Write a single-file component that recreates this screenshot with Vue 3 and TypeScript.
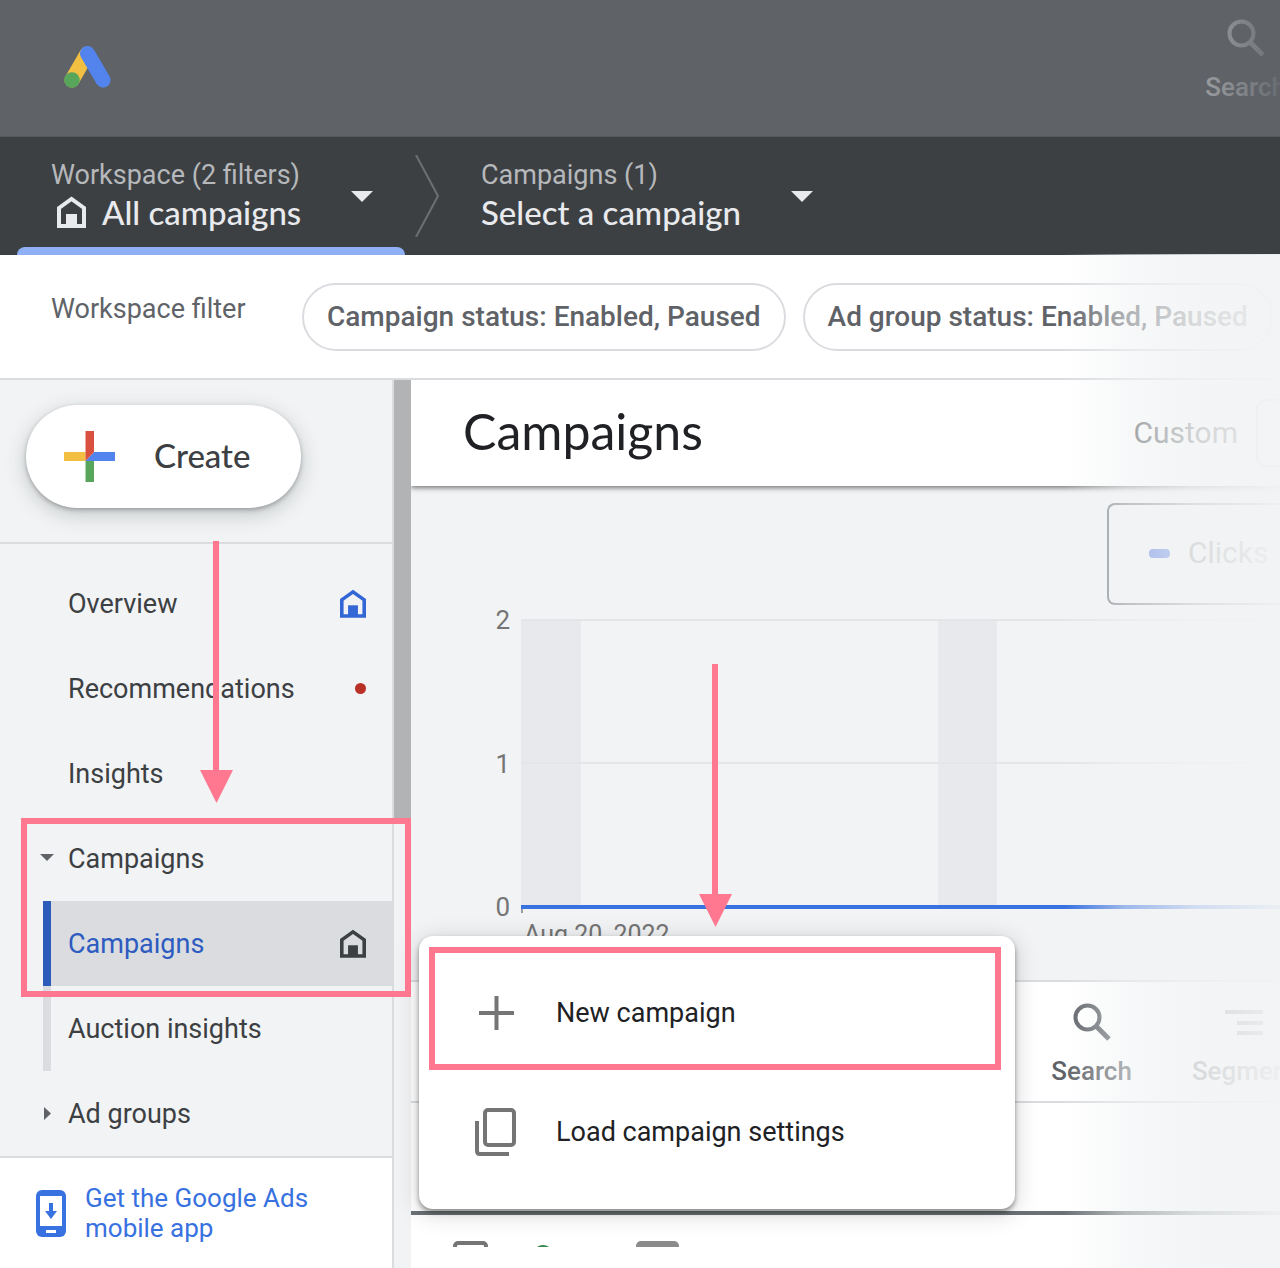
<script setup lang="ts">
interface NavItem {
  label: string
  badge?: 'home' | 'dot'
  caret?: 'down' | 'right'
  sub?: boolean
  active?: boolean
}

const navItems: NavItem[] = [
  { label: 'Overview', badge: 'home' },
  { label: 'Recommendations', badge: 'dot' },
  { label: 'Insights' },
  { label: 'Campaigns', caret: 'down' },
  { label: 'Campaigns', badge: 'home', sub: true, active: true },
  { label: 'Auction insights', sub: true },
  { label: 'Ad groups', caret: 'right' },
]

const axisTicks: number[] = [2, 1, 0]
</script>

<template>
  <div class="page">
    <header class="topbar">
      <svg class="logo" width="48" height="46" viewBox="0 0 48 46" role="img" aria-label="Google Ads">
        <path d="M8 36 L23 10" stroke="#f3bf42" stroke-width="15" stroke-linecap="round" />
        <path d="M23.500 9.500 L39 36" stroke="#5383ec" stroke-width="15" stroke-linecap="round" />
        <circle cx="8" cy="36" r="7.800" fill="#58a55c" />
      </svg>
      <button class="tool top-tool" type="button">
        <svg width="38" height="38" viewBox="0 0 38 38" fill="none" stroke="currentColor" stroke-width="4">
          <circle cx="14.500" cy="14.500" r="12" />
          <path d="M23 23 L36 36" stroke-width="5" />
        </svg>
        <span>Search</span>
      </button>
    </header>

    <div class="scope">
      <button class="scope-item current" type="button">
        <span class="scope-text">
          <span class="scope-label">Workspace (2 filters)</span>
          <span class="scope-value">
            <svg class="home" width="29" height="32" viewBox="0 0 29 32">
              <path d="M2 12 L14.500 3 L27 12 V30 H2 Z" fill="none" stroke="currentColor" stroke-width="4" />
              <rect x="9" y="18" width="11" height="11" fill="currentColor" />
            </svg>
            All campaigns
          </span>
        </span>
        <svg class="caret" width="22" height="11" viewBox="0 0 22 11"><path d="M0 0 H22 L11 11 Z" fill="currentColor" /></svg>
      </button>
      <svg class="chevron" width="24" height="82" viewBox="0 0 24 82" fill="none" stroke="#6d7073" stroke-width="2">
        <path d="M1 0 L23 41 L1 82" />
      </svg>
      <button class="scope-item next" type="button">
        <span class="scope-text">
          <span class="scope-label">Campaigns (1)</span>
          <span class="scope-value">Select a campaign</span>
        </span>
        <svg class="caret" width="22" height="11" viewBox="0 0 22 11"><path d="M0 0 H22 L11 11 Z" fill="currentColor" /></svg>
      </button>
    </div>

    <div class="filters">
      <span class="filters-title">Workspace filter</span>
      <button class="chip" type="button">Campaign status: Enabled, Paused</button>
      <button class="chip" type="button">Ad group status: Enabled, Paused</button>
    </div>

    <div class="body">
      <aside class="sidebar">
        <div class="create-area">
          <button class="create" type="button">
            <svg width="51" height="51" viewBox="0 0 51 51">
              <path d="M0 21 H21.500 V30 H0 Z" fill="#f3bf42" />
              <path d="M21.500 30 H30 V51 H21.500 Z" fill="#58a55c" />
              <path d="M30 21 H51 V30 H21.500 Z" fill="#5383ec" />
              <path d="M21.500 0 H30 V21 L21.500 30 Z" fill="#d9503f" />
            </svg>
            Create
          </button>
        </div>
        <nav class="nav">
          <a
            v-for="(item, index) in navItems"
            :key="index"
            href="#"
            class="nav-item"
            :class="{ sub: item.sub, active: item.active }"
          >
            <svg v-if="item.caret === 'down'" class="nav-caret" width="14" height="14" viewBox="0 0 14 14"><path d="M0 2 H14 L7 9 Z" fill="#5f6368" /></svg>
            <svg v-if="item.caret === 'right'" class="nav-caret" width="14" height="14" viewBox="0 0 14 14"><path d="M4 0 V13 L11 6.500 Z" fill="#5f6368" /></svg>
            <span class="nav-label">{{ item.label }}</span>
            <svg v-if="item.badge === 'home'" class="home" width="26" height="29" viewBox="0 0 29 32">
              <path d="M2 12 L14.500 3 L27 12 V30 H2 Z" fill="none" stroke="currentColor" stroke-width="4" />
              <rect x="9" y="18" width="11" height="11" fill="currentColor" />
            </svg>
            <i v-if="item.badge === 'dot'" class="dot"></i>
          </a>
        </nav>
        <a class="mobile-app" href="#">
          <svg width="30" height="47" viewBox="0 0 30 47">
            <rect width="30" height="47" rx="6" fill="#3871e0" />
            <rect x="4" y="6" width="22" height="30" fill="#fff" />
            <rect x="10" y="40" width="10" height="3" fill="#fff" />
            <path d="M13 13 H17 V21 H21 L15 29 L9 21 H13 Z" fill="#3871e0" />
          </svg>
          <span>Get the Google Ads<br />mobile app</span>
        </a>
      </aside>
      <div class="scroll-track"><div class="scroll-thumb"></div></div>

      <main class="main">
        <div class="title-bar">
          <h1>Campaigns</h1>
          <span class="range">Custom</span>
          <button class="range-button" type="button" aria-label="Date range"></button>
        </div>

        <section class="chart">
          <button class="metric" type="button"><i class="swatch"></i>Clicks</button>
          <div class="plot-row">
            <div class="ticks">
              <span v-for="tick in axisTicks" :key="tick">{{ tick }}</span>
            </div>
            <svg class="plot" height="296" aria-hidden="true">
              <rect x="0" y="2" width="60" height="286" fill="#e8e9ed" />
              <rect x="417" y="2" width="59" height="286" fill="#e8e9ed" />
              <rect x="0" y="0" width="100%" height="2" fill="#e3e5e7" />
              <rect x="0" y="143" width="100%" height="2" fill="#e3e5e7" />
              <rect x="0" y="286" width="2" height="8" fill="#9a9c9f" />
              <rect x="0" y="286" width="100%" height="4" fill="#3871e0" />
            </svg>
          </div>
          <div class="date">Aug 20, 2022</div>
        </section>

        <div class="toolbar">
          <button class="tool" type="button">
            <svg width="38" height="38" viewBox="0 0 38 38" fill="none" stroke="currentColor" stroke-width="4">
              <circle cx="14.500" cy="14.500" r="12" />
              <path d="M23 23 L36 36" stroke-width="5" />
            </svg>
            <span>Search</span>
          </button>
          <button class="tool" type="button">
            <svg width="38" height="38" viewBox="0 0 38 38" fill="currentColor">
              <rect x="0" y="7" width="38" height="4" />
              <rect x="12" y="18" width="26" height="4" />
              <rect x="12" y="28" width="26" height="4" />
            </svg>
            <span>Segment</span>
          </button>
        </div>
        <div class="table-gap"></div>
        <div class="table-head">
          <svg width="240" height="6" viewBox="0 0 240 6">
            <rect x="2" y="2" width="31" height="30" rx="3" fill="none" stroke="#757575" stroke-width="4" />
            <circle cx="90" cy="14" r="10" fill="#37874a" />
            <rect x="183" y="0" width="43" height="30" rx="5" fill="#8b8b8b" />
          </svg>
        </div>

        <div class="fade"></div>
        <div class="menu" role="menu">
          <button class="menu-item" type="button" role="menuitem">
            <svg width="42" height="48" viewBox="0 0 42 48" fill="none" stroke="#757575" stroke-width="4">
              <path d="M4 24 H39 M21.500 7 V41" />
            </svg>
            New campaign
          </button>
          <button class="menu-item" type="button" role="menuitem">
            <svg width="42" height="48" viewBox="0 0 42 48" fill="none" stroke="#757575" stroke-width="4">
              <rect x="10" y="2" width="29" height="35" rx="3" />
              <path d="M2 13 V43 Q2 46 5 46 H34" />
            </svg>
            Load campaign settings
          </button>
        </div>
      </main>
    </div>

    <div class="fade filters-fade"></div>
    <svg class="callouts" aria-hidden="true">
      <g fill="#ff7890">
        <path d="M213 541 H219 V770 H233 L216.500 803 L200 770 H213 Z" />
        <path d="M712 664 H718 V894 H732 L715.500 927 L699 894 H712 Z" />
      </g>
      <g fill="none" stroke="#ff7890" stroke-width="6">
        <rect x="24" y="821" width="384" height="173" />
        <rect x="432" y="950" width="566" height="117" />
      </g>
    </svg>
  </div>
</template>

<style>
body {
  margin: 0;
}
</style>

<style scoped>
.page {
  position: relative;
  display: flex;
  flex-direction: column;
  min-height: 100vh;
  overflow: hidden;
  background: #fff;
  color: #3c4043;
  font-family: Roboto, "Noto Sans", sans-serif;
  font-size: 27px;
  line-height: 32px;
  white-space: nowrap;
}
button {
  padding: 0;
  border: 0;
  background: none;
  color: inherit;
  font: inherit;
  text-align: left;
  cursor: pointer;
}
a {
  color: inherit;
  text-decoration: none;
}
svg {
  display: block;
  flex: none;
}

.topbar {
  position: relative;
  display: flex;
  justify-content: space-between;
  height: 136px;
  padding-left: 64px;
  background: #5f6368;
  border-bottom: 1px solid #54575b;
}
.logo {
  margin-top: 44px;
}
.tool {
  display: flex;
  flex-direction: column;
  align-items: center;
  gap: 14px;
  color: #5f6368;
  font-size: 26px;
  font-weight: 500;
}
.top-tool {
  margin: 19px -6px 0 0;
  color: #a4a6a9;
}
.topbar::after {
  content: "";
  position: absolute;
  inset: 0 0 0 auto;
  width: 80px;
  background: linear-gradient(90deg, rgba(95, 99, 104, 0.1), rgba(95, 99, 104, 0.85));
  pointer-events: none;
}

.scope {
  display: flex;
  height: 118px;
  background: #3c4043;
  color: #e8eaed;
}
.scope-item {
  display: flex;
  gap: 50px;
}
.scope-item.current {
  width: 388px;
  margin-left: 17px;
  padding-left: 34px;
  position: relative;
}
.scope-item.current::after {
  content: "";
  position: absolute;
  inset: auto 0 0 0;
  height: 8px;
  border-radius: 8px 8px 0 0;
  background: #8fb0f4;
}
.scope-text {
  display: flex;
  flex-direction: column;
  gap: 5px;
  padding-top: 22px;
}
.scope-label {
  color: #b6b8bb;
  font-size: 27px;
}
.scope-value {
  display: flex;
  align-items: center;
  gap: 16px;
  font-family: Lato, Roboto, sans-serif;
  font-size: 33px;
  font-weight: 500;
}
.scope-value .home {
  margin-left: 6px;
}
.caret {
  margin-top: 54px;
}
.chevron {
  margin: 18px 42px 0 10px;
}

.filters {
  display: flex;
  align-items: center;
  gap: 17px;
  height: 123px;
  border-bottom: 2px solid #dadce0;
  color: #5f6368;
}
.filters-title {
  box-sizing: border-box;
  width: 285px;
  padding: 0 0 16px 51px;
}
.chip {
  flex: none;
  height: 68px;
  padding: 0 23px;
  border: 2px solid #dadce0;
  border-radius: 34px;
  font-weight: 500;
  font-size: 28px;
}

.body {
  display: flex;
  flex: 1;
}
.sidebar {
  display: flex;
  flex-direction: column;
  width: 392px;
  flex: none;
  border-right: 2px solid #dadce0;
  background: #f1f3f4;
}
.create-area {
  padding: 25px 26px 34px;
  border-bottom: 2px solid #dadce0;
}
.create {
  display: flex;
  align-items: center;
  gap: 39px;
  width: 275px;
  height: 103px;
  padding: 0 0 4px 38px;
  border-radius: 52px;
  background: #fff;
  box-shadow: 0 2px 4px rgba(60, 64, 67, 0.35), 0 6px 20px rgba(60, 64, 67, 0.25);
  font-family: Lato, Roboto, sans-serif;
  font-size: 33px;
  font-weight: 500;
}
.create svg {
  margin-top: 4px;
}
.nav {
  padding-top: 17px;
}
.nav-item {
  display: flex;
  align-items: center;
  height: 85px;
  padding: 0 26px 0 68px;
}
.nav-item.sub {
  margin-left: 43px;
  padding-left: 17px;
  border-left: 8px solid #dadce0;
}
.nav-item.active {
  border-left-color: #2d5bb9;
  background: #dadce0;
}
.nav-caret {
  margin-left: -28px;
  margin-right: 14px;
}
.nav-label {
  flex: 1;
}
.nav-item .home {
  color: #3367d6;
}
.nav-item.active .nav-label {
  color: #2d5bc0;
}
.nav-item.active .home {
  color: #3c4043;
}
.dot {
  width: 11px;
  height: 11px;
  border-radius: 50%;
  background: #b93126;
}
.mobile-app {
  display: flex;
  flex: 1;
  gap: 19px;
  padding: 25px 0 24px 36px;
  border-top: 2px solid #dadce0;
  background: #fff;
  color: #3871e0;
  font-size: 26px;
  line-height: 30px;
}
.mobile-app svg {
  margin-top: 7px;
}
.scroll-track {
  width: 17px;
  flex: none;
  background: #f1f3f4;
}
.scroll-thumb {
  height: 440px;
  background: #b1b3b5;
}

.main {
  position: relative;
  display: flex;
  flex: 1;
  flex-direction: column;
  min-width: 0;
}
.title-bar {
  position: relative;
  display: flex;
  align-items: center;
  height: 106px;
  padding-left: 52px;
  box-shadow: 0 2px 5px rgba(0, 0, 0, 0.5);
  clip-path: inset(0 0 -12px 0);
}
h1 {
  flex: 1;
  margin: 0;
  padding-bottom: 4px;
  color: #202124;
  font-family: Lato, Roboto, sans-serif;
  font-size: 50px;
  font-weight: 400;
  line-height: 60px;
}
.range {
  margin-right: 18px;
  font-size: 30px;
}
.range-button {
  width: 24px;
  height: 68px;
  border: 2px solid #bdc1c6;
  border-right: 0;
  border-radius: 10px 0 0 10px;
}
.chart {
  display: flex;
  flex-direction: column;
  height: 477px;
  padding-top: 17px;
  border-bottom: 2px solid #dadce0;
  background: #f1f3f4;
  color: #757575;
  font-size: 26px;
}
.metric {
  display: flex;
  align-items: center;
  align-self: flex-end;
  gap: 18px;
  width: 173px;
  height: 102px;
  box-sizing: border-box;
  padding: 0 0 2px 40px;
  border: 2px solid #80868b;
  border-right: 0;
  border-radius: 8px 0 0 8px;
  font-size: 30px;
}
.swatch {
  width: 21px;
  height: 9px;
  border-radius: 4px;
  background: #4069e0;
}
.plot-row {
  display: flex;
  gap: 11px;
  padding-top: 14px;
}
.ticks {
  display: flex;
  flex-direction: column;
  justify-content: space-between;
  width: 99px;
  height: 319px;
  margin: -15px 0 -17px;
  text-align: right;
}
.plot {
  flex: 1;
  min-width: 0;
}
.date {
  padding-left: 113px;
  font-size: 25px;
  margin-top: 4px;
}
.toolbar {
  display: flex;
  justify-content: flex-end;
  gap: 60px;
  height: 119px;
  border-bottom: 2px solid #dadce0;
}
.toolbar .tool {
  padding-top: 21px;
}
.toolbar .tool:last-child {
  margin-right: -16px;
}
.table-gap {
  height: 108px;
  border-bottom: 4px solid #6b7275;
}
.table-head {
  padding: 26px 0 22px 42px;
}

.fade {
  position: absolute;
  inset: 0 0 0 auto;
  width: 216px;
  background: linear-gradient(
    90deg,
    rgba(241, 243, 244, 0),
    rgba(241, 243, 244, 0.54) 28%,
    rgba(241, 243, 244, 0.82) 60%,
    rgba(241, 243, 244, 0.97)
  );
  pointer-events: none;
}
.filters-fade {
  top: 254px;
  bottom: auto;
  height: 126px;
}

.menu {
  position: absolute;
  top: 556px;
  left: 8px;
  width: 596px;
  box-sizing: border-box;
  padding: 17px 0 18px;
  border-radius: 14px;
  background: #fff;
  box-shadow: 0 3px 5px rgba(0, 0, 0, 0.4), 0 4px 24px rgba(0, 0, 0, 0.18);
  color: #202124;
}
.menu-item {
  display: flex;
  align-items: center;
  gap: 39px;
  width: 100%;
  height: 119px;
  padding-left: 56px;
}

.callouts {
  position: absolute;
  inset: 0;
  width: 100%;
  height: 100%;
  pointer-events: none;
}
</style>
